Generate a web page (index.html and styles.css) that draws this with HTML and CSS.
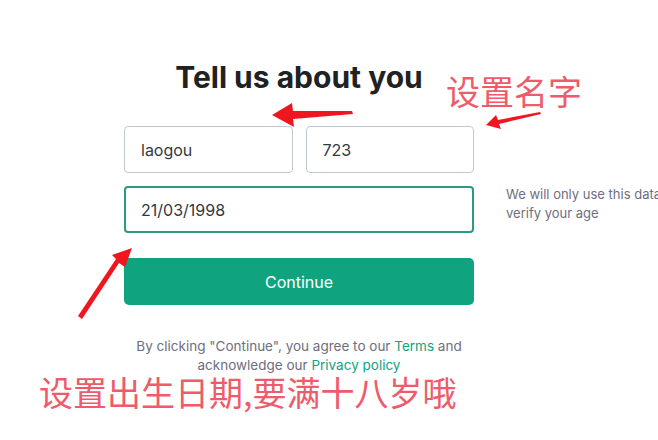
FILE: index.html
```html
<!DOCTYPE html>
<html lang="en">
<head>
<meta charset="utf-8">
<title>Tell us about you</title>
<link rel="stylesheet" href="styles.css">
</head>
<body>
<div class="page">
  <div class="row">
    <div class="form">
      <h1 class="title">Tell us about you</h1>
      <div class="names">
        <div class="field">laogou</div>
        <div class="field">723</div>
      </div>
      <div class="field field-active">21/03/1998</div>
      <button class="btn">Continue</button>
      <p class="legal">By clicking "Continue", you agree to our <span class="link">Terms</span> and<br>acknowledge our <span class="link">Privacy policy</span></p>
    </div>
    <div class="note">We will only use this data to<br>verify your age</div>
  </div>
  <div class="anno anno-name">设置名字</div>
  <div class="anno anno-birth">设置出生日期,要满十八岁哦</div>
  <svg class="arrows" width="658" height="440" viewBox="0 0 658 440">
    <path d="M352 111 L353 114 L293 119 L294 127 L272 115 L292 103 L293 111 Z" fill="#f0161f"/>
    <path d="M540 112 L541 114 L499 124 L501 129 L486 125 L496 115 L498 120 Z" fill="#f0161f"/>
    <path d="M78 316 L82 319 L119 263 L125 267 L132 248 L112 255 L116 259 Z" fill="#f0161f"/>
  </svg>
</div>
</body>
</html>
```
FILE: styles.css
```css
* { box-sizing: border-box; }
html, body { margin: 0; padding: 0; background: #fff; }
body { font-family: Inter, "Noto Sans", sans-serif; color: #2d333a; }
.page { position: relative; width: 658px; height: 440px; overflow: hidden; }
.row { display: flex; padding-left: 124px; padding-top: 57px; }
.form { width: 350px; flex-shrink: 0; display: flex; flex-direction: column; }
.title { margin: 0 0 29px; font-size: 30px; line-height: 40px; font-weight: 700; text-align: center; color: #202123; }
.names { display: flex; gap: 13px; margin-bottom: 13px; }
.names .field { flex: 1; }
.field { height: 47px; border: 1px solid #c2c8d0; border-radius: 4px; padding-left: 16px; display: flex; align-items: center; font-size: 16px; color: #353740; }
.field-active { border: 2px solid #2b9a82; padding-left: 15px; }
.btn { margin-top: 25px; height: 47px; border: none; border-radius: 5px; background: #10a37f; color: #fff; font-family: Inter, "Noto Sans", sans-serif; font-size: 16px; }
.legal { margin: 32px 0 0; text-align: center; font-size: 13.5px; line-height: 19px; color: #6e6e80; white-space: nowrap; }
.link { color: #10a37f; }
.note { margin-left: 32px; margin-top: 128px; font-size: 13px; line-height: 19px; color: #6e6e80; white-space: nowrap; }
.anno { position: absolute; font-family: "Noto Sans CJK SC", sans-serif; color: #ee5b6b; font-size: 34px; line-height: 40px; white-space: nowrap; }
.anno-name { left: 446px; top: 71px; }
.anno-birth { left: 39px; top: 372px; }
.arrows { position: absolute; left: 0; top: 0; }
```
